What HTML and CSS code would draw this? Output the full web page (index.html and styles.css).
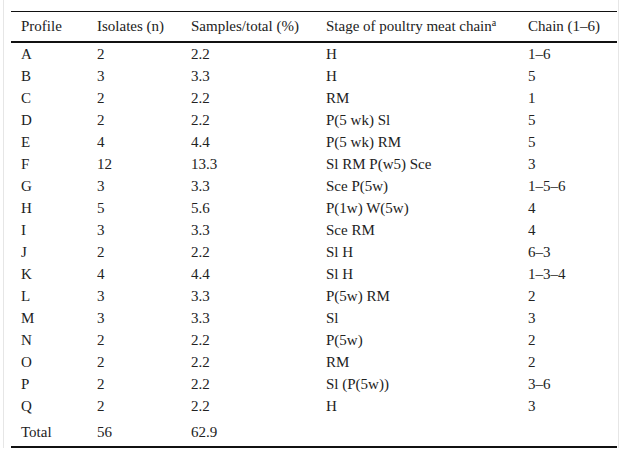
FILE: index.html
```html
<!DOCTYPE html>
<html lang="en">
<head>
<meta charset="utf-8">
<title>Profiles</title>
<link rel="stylesheet" href="styles.css">
</head>
<body>
<div class="frame">
<table class="data">
<colgroup>
<col class="c1"><col class="c2"><col class="c3"><col class="c4"><col class="c5">
</colgroup>
<thead>
<tr><th>Profile</th><th>Isolates (n)</th><th>Samples/total (%)</th><th>Stage of poultry meat chain<sup>a</sup></th><th>Chain (1–6)</th></tr>
</thead>
<tbody>
<tr><td>A</td><td>2</td><td>2.2</td><td>H</td><td>1–6</td></tr>
<tr><td>B</td><td>3</td><td>3.3</td><td>H</td><td>5</td></tr>
<tr><td>C</td><td>2</td><td>2.2</td><td>RM</td><td>1</td></tr>
<tr><td>D</td><td>2</td><td>2.2</td><td>P(5 wk) Sl</td><td>5</td></tr>
<tr><td>E</td><td>4</td><td>4.4</td><td>P(5 wk) RM</td><td>5</td></tr>
<tr><td>F</td><td>12</td><td>13.3</td><td>Sl RM P(w5) Sce</td><td>3</td></tr>
<tr><td>G</td><td>3</td><td>3.3</td><td>Sce P(5w)</td><td>1–5–6</td></tr>
<tr><td>H</td><td>5</td><td>5.6</td><td>P(1w) W(5w)</td><td>4</td></tr>
<tr><td>I</td><td>3</td><td>3.3</td><td>Sce RM</td><td>4</td></tr>
<tr><td>J</td><td>2</td><td>2.2</td><td>Sl H</td><td>6–3</td></tr>
<tr><td>K</td><td>4</td><td>4.4</td><td>Sl H</td><td>1–3–4</td></tr>
<tr><td>L</td><td>3</td><td>3.3</td><td>P(5w) RM</td><td>2</td></tr>
<tr><td>M</td><td>3</td><td>3.3</td><td>Sl</td><td>3</td></tr>
<tr><td>N</td><td>2</td><td>2.2</td><td>P(5w)</td><td>2</td></tr>
<tr><td>O</td><td>2</td><td>2.2</td><td>RM</td><td>2</td></tr>
<tr><td>P</td><td>2</td><td>2.2</td><td>Sl (P(5w))</td><td>3–6</td></tr>
<tr><td>Q</td><td>2</td><td>2.2</td><td>H</td><td>3</td></tr>
<tr class="total"><td>Total</td><td>56</td><td>62.9</td><td></td><td></td></tr>
</tbody>
</table>
</div>
</body>
</html>
```
FILE: styles.css
```css
html, body {
  margin: 0;
  padding: 0;
  background: #fff;
}
body {
  font-family: "Liberation Serif", "Times New Roman", serif;
  font-size: 15px;
  color: #222;
}
.frame {
  margin-left: 3px;
  width: 616px;
  padding: 11px 0 0 7px;
  border-left: 1px solid #e6e6e6;
  border-right: 1px solid #e6e6e6;
  box-sizing: border-box;
}
.data {
  width: 606px;
  border-collapse: separate;
  border-spacing: 0;
  table-layout: fixed;
}
.c1 { width: 76px; }
.c2 { width: 94px; }
.c3 { width: 135px; }
.c4 { width: 202px; }
.c5 { width: 99px; }
.data th {
  font-weight: normal;
  text-align: left;
  padding: 0 0 0 10px;
  height: 29px;
  line-height: 17px;
  border-top: 1px solid #111;
  border-bottom: 2px solid #111;
  white-space: nowrap;
}
.data th sup {
  font-size: 10px;
  line-height: 0;
  vertical-align: 5px;
}
.data td {
  padding: 0 0 0 10px;
  height: 22px;
  line-height: 17px;
  white-space: nowrap;
}
.data tr.total td {
  height: 25px;
  padding-top: 3px;
  padding-bottom: 1px;
  border-bottom: 2px solid #111;
}
```
